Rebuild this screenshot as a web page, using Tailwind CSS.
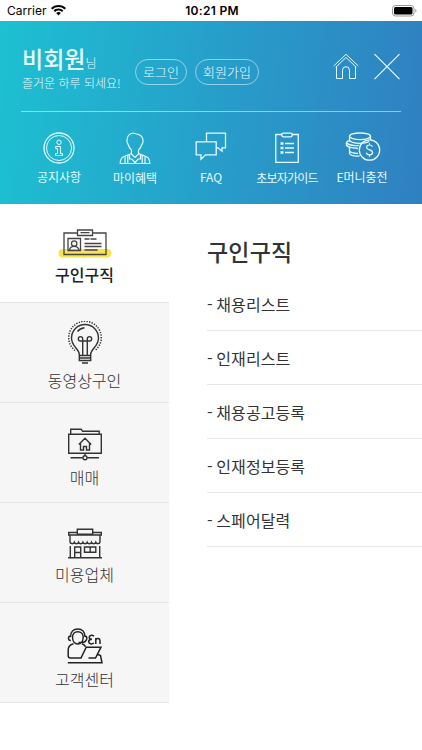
<!DOCTYPE html>
<html lang="ko">
<head>
  <meta charset="UTF-8" />
  <meta name="viewport" content="width=device-width, initial-scale=1" />
  <title>구인구직</title>
  <script src="https://cdn.jsdelivr.net/npm/@tailwindcss/browser@4"></script>
</head>
<body class="bg-white font-['Noto_Sans_CJK_KR','Noto_Sans',sans-serif] text-[#333]">
  <div class="w-[422px] h-[750px] overflow-hidden">

    <!-- Status bar -->
    <div class="h-[21px] grid grid-cols-3 items-center pl-[7px] pr-[5px] font-['Inter',sans-serif] text-black">
      <div class="flex items-center gap-[4px]">
        <span class="text-[12px] leading-[21px] tracking-[0.05px]">Carrier</span>
        <svg class="w-[15px] h-[11px]" viewBox="0 0 15 11">
          <path d="M7.500 0C4.600 0 2 1.100 0 3l1.400 1.500a8.800 8.800 0 0 1 12.200 0L15 3C13 1.100 10.400 0 7.500 0zM7.500 3.600c-1.900 0-3.600.7-4.900 1.900L4 7a5 5 0 0 1 7 0l1.400-1.500a7.200 7.200 0 0 0-4.900-1.900zM7.500 7.100c-.9 0-1.700.4-2.300.9l2.300 2.500L9.800 8c-.6-.5-1.400-.9-2.300-.9z" />
        </svg>
      </div>
      <div class="text-center text-[12px] leading-[21px] font-semibold tracking-[0.3px] whitespace-nowrap">10:21 PM</div>
      <svg class="w-[25px] h-[12px] justify-self-end" viewBox="0 0 25 12">
        <rect x=".5" y=".5" width="21.500" height="10.500" rx="3" fill="none" stroke="#999" />
        <rect x="2" y="2" width="18.500" height="7.500" rx="1.500" />
        <path d="M23.300 4v3.600c.8-.3 1.200-1 1.200-1.800s-.4-1.500-1.200-1.800z" fill="#999" />
      </svg>
    </div>

    <!-- Header -->
    <header class="h-[183px] bg-linear-[95deg,#1dc0d1_0%,#26a0cb_48%,#3080c0_100%] text-[#e4fbff]">
      <div class="h-[91px] mx-[21px] border-b border-white/50 flex items-start">
        <div class="w-[114px] pt-[21px] pl-px">
          <p class="leading-[32px] whitespace-nowrap"><span class="text-[23px] font-medium">비회원</span><span class="text-[12px] font-light">님</span></p>
          <p class="-mt-1 text-[12px] leading-[16px] font-light whitespace-nowrap">즐거운 하루 되세요!</p>
        </div>
        <div class="flex gap-[8px] pt-[38px]">
          <a class="w-[52px] h-[26px] rounded-full border border-white/50 text-[13px] leading-[23px] font-light text-center">로그인</a>
          <a class="w-[64px] h-[26px] rounded-full border border-white/50 text-[13px] leading-[23px] font-light text-center">회원가입</a>
        </div>
        <div class="ml-auto pt-[32px] pr-px flex gap-[15px]">
          <svg class="w-[26px] h-[27px]" viewBox="0 0 26 27" fill="none" stroke="currentColor">
            <path d="M.7 13 13 1.300 25.300 13M2.700 14.300 13 4.500l10.300 9.800M3.500 13.500v12h6v-8.300a3.500 3.500 0 0 1 7 0v8.300h6v-12" />
          </svg>
          <svg class="w-[26px] h-[27px]" viewBox="0 0 26 27" fill="none" stroke="currentColor" stroke-width="1.200">
            <path d="M.5 1.200 25.500 26.200M25.500 1.200.5 26.200" />
          </svg>
        </div>
      </div>

      <nav class="flex pt-[20px] pl-[21px] text-[12px] leading-[16px] text-center whitespace-nowrap">
        <a class="w-[76px] flex flex-col items-center gap-[5px]">
          <svg class="w-[32px] h-[32px]" viewBox="0 0 32 32" fill="none" stroke="currentColor">
            <circle cx="16" cy="16" r="15" stroke-width="1.300" />
            <circle cx="16" cy="16" r="12.500" />
            <circle cx="16" cy="10.300" r="2.200" />
            <path d="M12.700 14.500h4.800v7h2v2h-7v-2h2v-5h-1.800z" />
          </svg>
          <span>공지사항</span>
        </a>
        <a class="w-[76px] flex flex-col items-center gap-[6px]">
          <svg class="w-[32px] h-[32px]" viewBox="0 0 32 32" fill="none" stroke="currentColor" stroke-width="1.200">
            <path d="M14.500 1C10.500 1.500 8 4.500 8 8.500c-.3 2 .3 3 1.200 4 .6 2.300 1.800 4.200 3.300 5.500v4l3.500 3.500 3.500-3.500v-4c1.500-1.300 2.700-3.200 3.300-5.500.9-1 1.500-2 1.200-4-.2-4-3-6-6.500-6.500zM12.500 21.500 5 24.500c-2.500 1-3.800 2.500-3.800 7h29.600c0-4.500-1.300-6-3.800-7l-7.500-3M10.500 22.500V27h2.300l3.200 3.500 3.200-3.500h2.300v-4.500M6 31v-6.500M26 31v-6.500M8.800 31v-7.700M23.200 31v-7.700" />
          </svg>
          <span>마이혜택</span>
        </a>
        <a class="w-[76px] flex flex-col items-center gap-[5px]">
          <svg class="w-[32px] h-[32px]" viewBox="0 0 32 32" fill="none" stroke="currentColor" stroke-width="1.300">
            <path d="M11.500 9.500V1.200h19v14.600h-3.500v3.400l-4-3.400h-1.700M1.200 9.800h20v13H10.500L6 27.300v-4.500H1.200z" />
          </svg>
          <span>FAQ</span>
        </a>
        <a class="w-[76px] flex flex-col items-center gap-[6px]">
          <svg class="w-[32px] h-[32px]" viewBox="0 0 32 32" fill="none" stroke="currentColor" stroke-width="1.300">
            <path d="M10.500 2.500H4.800v27.800h22.500V2.500h-6M12.500 1.200h7a1.800 1.800 0 0 1 0 3.600h-7a1.800 1.800 0 0 1 0-3.600zM14 11.500h9M14 16h9M14 20.500h9" />
            <path d="M9.500 11.500h3M9.500 16h3M9.500 20.500h3" stroke-width="2.600" />
          </svg>
          <span class="tracking-[-0.8px]">초보자가이드</span>
        </a>
        <a class="w-[76px] flex flex-col items-center gap-[5px]">
          <svg class="w-[36px] h-[32px]" viewBox="0 0 36 32" fill="none" stroke="currentColor" stroke-width="1.300">
            <ellipse cx="15" cy="4.300" rx="10.500" ry="3.300" />
            <path d="M4.500 4.300V8c0 1.800 4.700 3.300 10.500 3.300 4 0 7.300-.7 9.300-1.800M25.500 4.300V8M4.800 8.500C1 9 1 11 1.500 13c.5 2 6 3.500 11.500 3.200M1.500 10.500c1.500 2 6.500 3.500 12.500 2.800M4.500 15.500v3.300c1 1.700 5 2.500 8.500 2.500M4.500 18v3.500c1 1.700 5.500 2.800 10 2.500" />
            <circle cx="24.500" cy="18" r="10.200" />
            <path d="M27.500 14.800c-.4-1.300-1.500-1.800-3-1.800-1.700 0-2.900.8-2.900 2.300 0 3.400 6 1.800 6 5.200 0 1.600-1.300 2.400-3 2.400-1.800 0-3-.7-3.300-2.200M24.500 11.300V13M24.500 22.900v1.800" stroke-width="1.200" />
          </svg>
          <span class="-ml-[2px]">E머니충전</span>
        </a>
      </nav>
    </header>

    <main class="flex">
      <!-- Category menu -->
      <aside class="w-[169px] text-[16px] leading-[22px] font-light text-center">
        <a class="h-[99px] pt-[23px] border-b border-[#e4e4e4] flex flex-col items-center font-medium text-[#222]">
          <svg class="w-[54px] h-[32px] mb-[4px]" viewBox="0 0 54 32" fill="none" stroke="#444" stroke-width="1.300">
            <rect x=".5" y="22" width="53" height="8.500" rx="4.200" fill="#fbe34d" stroke="none" />
            <path d="M19.500 6H6v21.500h42V6H35M19.500 3h15v5.500h-15zM22.500 5.700h9M10 11.500h12.500V23.500H10z" />
            <circle cx="16.200" cy="16.500" r="2.700" />
            <path d="M11.500 23c.5-2.500 2-3.600 4.700-3.600s4.200 1.100 4.800 3.600M26.500 12h5M32.500 12h6M26.500 16.500h17M26.500 19.500h17M26.500 23h13" />
          </svg>
          <span>구인구직</span>
        </a>
        <a class="h-[100px] pt-[18px] bg-[#f6f6f6] border-b border-[#e4e4e4] flex flex-col items-center">
          <svg class="w-[36px] h-[44px] mb-[4px]" viewBox="0 0 36 44" fill="none" stroke="#333" stroke-width="1.400">
            <path d="M8 29.500A16.300 16.300 0 1 1 28 29.500" stroke-dasharray="1.300 1.300" stroke-width="1.500" />
            <path d="M12.500 34.500c0-3-1-4.500-3.500-7.500-2-2.500-4.500-5-4.500-10a13.500 13.500 0 0 1 27 0c0 5-2.500 7.500-4.500 10-2.500 3-3.500 4.500-3.500 7.500M10.500 10.500c1.500-2 4-3.300 7-3.700" />
            <path d="M15.700 34.500V20M20.300 34.500V20M15.700 20h-2.200a2.200 2.200 0 1 1 2.200-2.200zM20.300 20h2.200a2.200 2.200 0 1 0-2.200-2.200zM15.700 20h4.600M12.300 34.500h11.400v5H12.300zM12.300 37h11.400M15 42h6" />
          </svg>
          <span>동영상구인</span>
        </a>
        <a class="h-[100px] pt-[25px] bg-[#f6f6f6] border-b border-[#e4e4e4] flex flex-col items-center">
          <svg class="w-[36px] h-[33px] mb-[5px]" viewBox="0 0 36 33" fill="none" stroke="#333" stroke-width="1.400">
            <path d="M1.700 6.200h32.600v19H1.700zM3.700 6V1.300h10.500l1.500 2h16.500V6M18 25v2.500M3.500 29.800h12.200M20.300 29.800H32" />
            <circle cx="18" cy="29.700" r="2" />
            <path d="M11.800 16.500 18 10.200l6.200 6.300M13.500 15v7h3v-3.500h3V22h3v-7" />
          </svg>
          <span>매매</span>
        </a>
        <a class="h-[100px] pt-[25px] bg-[#f6f6f6] border-b border-[#e4e4e4] flex flex-col items-center">
          <svg class="w-[36px] h-[31px] mb-[4px]" viewBox="0 0 36 31" fill="none" stroke="#333" stroke-width="1.400">
            <path d="M10 4.500H1.700V7h32.600V4.500H26M10.300 1.300h15.400v5H10.300zM3 7v7c.5 2.200 3.500 2.200 4.300.2.800 2 3.500 2 4.300 0 .8 2 3.500 2 4.300 0 .8 2 3.500 2 4.300 0 .8 2 3.500 2 4.300 0 .8 2 3.500 2 4.300 0 .8 2 3.700 2 4.200-.2V7M3.300 18v11.500M32.700 18v11.500M1 29.700h34M7.700 29.500V19h6v10.500M7.700 24.500h6M17.500 19h11.300v5.300H17.500zM23.200 19v5.300" />
          </svg>
          <span>미용업체</span>
        </a>
        <a class="h-[100px] pt-[24px] bg-[#f6f6f6] border-b border-[#e4e4e4] flex flex-col items-center">
          <svg class="w-[36px] h-[37px] mb-[4px]" viewBox="0 0 36 37" fill="none" stroke="#222" stroke-width="1.500">
            <path d="M3.500 10C3.500 5 6.500 2 10.800 2S18 5 18 10M5.500 10c0-3 2-5.300 5.300-5.300S16.200 7 16.200 10c0 4-2.200 7-5.400 7s-5.300-3-5.300-7zM3.800 9C2.500 9 1.500 10 1.500 11.300s1 2.300 2.300 2.300M17.800 9c1.200 0 2 1 2 2.300 0 2.500-2 4.200-5.800 4.200h-2.500" />
            <path d="M6.500 16.700c-3.500 1-5.300 3-5.300 6v6c0 1.500.8 2.300 2.300 2.300H14l5.200-10.800h14.800L28.500 31H21.500M15 16.700c1.500.5 2.700 1.500 3.500 3M31 27.500l2.500 1 1.500 7.300H.8" />
            <path d="M27 9c-2.500-1.300-4.800-.5-4.800 1.300 0 1.300 1.200 2 2.800 2-2 0-3.300 1-3.300 2.500 0 2.200 3 2.800 5.300 1.200M28.800 17v-6M28.800 12.500c1-1.500 4.200-1.700 4.200 1V17" />
          </svg>
          <span>고객센터</span>
        </a>
      </aside>

      <!-- Submenu -->
      <section class="flex-1 pl-[38px] pt-[31px]">
        <h1 class="text-[23px] leading-[32px] mb-[10px] font-medium tracking-[0.2px]">구인구직</h1>
        <ul class="text-[16px] leading-[55px] tracking-[0.1px] [word-spacing:-1px]">
          <li class="h-[54px] border-b border-[#e6e6e6]">- 채용리스트</li>
          <li class="h-[54px] border-b border-[#e6e6e6]">- 인재리스트</li>
          <li class="h-[54px] border-b border-[#e6e6e6]">- 채용공고등록</li>
          <li class="h-[54px] border-b border-[#e6e6e6]">- 인재정보등록</li>
          <li class="h-[54px] border-b border-[#e6e6e6]">- 스페어달력</li>
        </ul>
      </section>
    </main>
  </div>
</body>
</html>
